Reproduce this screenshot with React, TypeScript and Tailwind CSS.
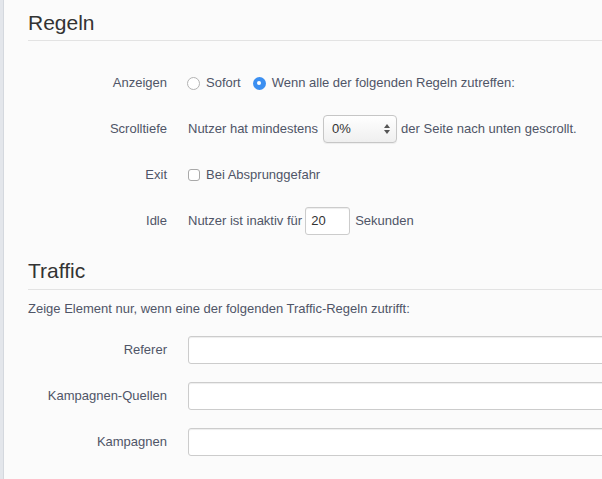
import type { ReactNode } from 'react';

const font = { fontFamily: '"Liberation Sans", Arial, sans-serif' };

const Row = ({ label, children }: { label: string; children: ReactNode }) => (
  <div className="flex h-[28px] items-center">
    <div className="w-[139px] shrink-0 text-right text-[13px] text-[#4f5567]">{label}</div>
    <div className="flex min-w-0 flex-1 items-center pl-[20px] text-[13px] text-[#4f5567]">{children}</div>
  </div>
);

const Radio = ({ checked }: { checked?: boolean }) =>
  checked ? (
    <span className="flex h-[13px] w-[13px] shrink-0 items-center justify-center rounded-full bg-[#3b8ff1]">
      <span className="h-[4px] w-[4px] rounded-full bg-white" />
    </span>
  ) : (
    <span className="h-[13px] w-[13px] shrink-0 rounded-full border border-[#b3b3b3] bg-white" />
  );

const TextInput = ({ value, className }: { value?: string; className?: string }) => (
  <div
    className={`flex h-[28px] items-center rounded-[3px] border border-[#cccccc] bg-white px-[5px] text-[13px] text-[#333] shadow-[inset_0_1px_1px_rgba(0,0,0,0.075)] ${className ?? ''}`}
  >
    {value}
  </div>
);

const App = () => {
  return (
    <div className="flex min-h-[479px] w-[602px] overflow-hidden bg-[#fbfbfb]" style={font}>
      <div className="w-[3px] shrink-0 bg-[#e3e6eb]" />
      <div className="w-px shrink-0 bg-[#d4d8de]" />
      <div className="min-w-0 flex-1 pl-6">
        <h2 className="border-b border-[#e3e3e3] pt-[11px] pb-[5px] text-[21px] leading-[24px] text-[#333]">Regeln</h2>

        <div className="mt-[28px] flex flex-col gap-[18px]">
          <Row label="Anzeigen">
            <Radio />
            <span className="ml-[6px]">Sofort</span>
            <span className="ml-[12px]">
              <Radio checked />
            </span>
            <span className="ml-[6px] whitespace-nowrap">Wenn alle der folgenden Regeln zutreffen:</span>
          </Row>

          <Row label="Scrolltiefe">
            <span className="ml-px whitespace-nowrap">Nutzer hat mindestens</span>
            <div className="ml-[5px] flex h-[28px] w-[74px] shrink-0 items-center justify-between rounded-[4px] border border-[#c6c6c6] bg-gradient-to-b from-white to-[#efefef] pr-[6px] pl-[8px] text-[#333] shadow-[0_1px_1px_rgba(0,0,0,0.06)]">
              <span>0%</span>
              <span className="flex flex-col items-center gap-[2px]">
                <span className="h-0 w-0 border-x-[3px] border-b-[4px] border-x-transparent border-b-[#555]" />
                <span className="h-0 w-0 border-x-[3px] border-t-[4px] border-x-transparent border-t-[#555]" />
              </span>
            </div>
            <span className="ml-[4px] whitespace-nowrap">der Seite nach unten gescrollt.</span>
          </Row>

          <Row label="Exit">
            <span className="ml-px h-[12px] w-[12px] shrink-0 rounded-[3px] border border-[#a9a9a9] bg-white" />
            <span className="ml-[6px]">Bei Absprunggefahr</span>
          </Row>

          <Row label="Idle">
            <span className="ml-px whitespace-nowrap">Nutzer ist inaktiv für</span>
            <TextInput value="20" className="ml-[3px] w-[45px]" />
            <span className="ml-[5px]">Sekunden</span>
          </Row>
        </div>

        <h2 className="mt-[24px] border-b border-[#e3e3e3] pb-[6px] text-[21px] leading-[24px] text-[#333]">Traffic</h2>

        <p className="mt-[10px] text-[13px] leading-[18px] text-[#4f5567]">
          Zeige Element nur, wenn eine der folgenden Traffic-Regeln zutrifft:
        </p>

        <div className="mt-[18px] flex flex-col gap-[18px]">
          {['Referer', 'Kampagnen-Quellen', 'Kampagnen'].map((l) => (
            <Row key={l} label={l}>
              <TextInput className="ml-px w-[440px] shrink-0" />
            </Row>
          ))}
        </div>
      </div>
    </div>
  );
};

export default App;
